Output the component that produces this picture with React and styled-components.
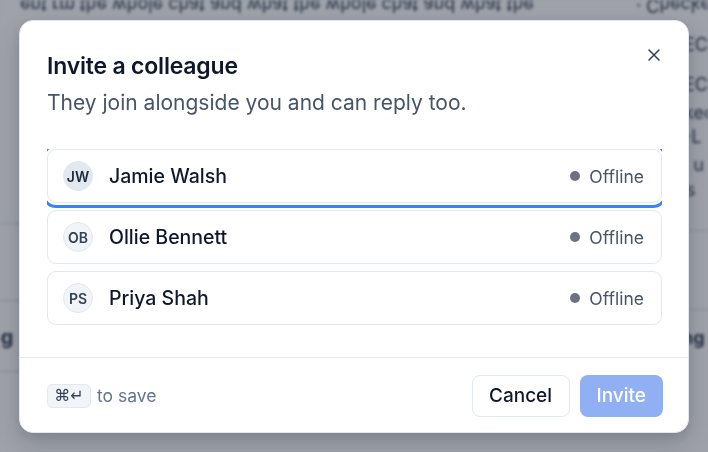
import React from "react";
import styled, { createGlobalStyle } from "styled-components";

const Global = createGlobalStyle`
  html, body { margin: 0; padding: 0; }
  body {
    font-family: Inter, "Noto Sans", "Liberation Sans", sans-serif;
    background: #f8fafc;
    width: 708px;
    height: 452px;
    overflow: hidden;
  }
  * { box-sizing: border-box; }
`;

const Page = styled.div`
  width: 708px;
  height: 452px;
  display: grid;
  grid-template-columns: 1fr 76px;
  background: #ffffff;
  color: #1e293b;
  filter: blur(1.4px);
`;

const Main = styled.div`
  display: flex;
  flex-direction: column;
  padding: 0 20px;
  overflow: hidden;
`;

const FlippedLine = styled.div`
  font-size: 18px;
  line-height: 20px;
  color: #334155;
  transform: scaleY(-1);
  margin-top: -5px;
  height: 20px;
  white-space: nowrap;
`;

const Rule = styled.div`
  height: 1px;
  background: #cbd5e1;
  margin-top: ${(p) => p.$mt}px;
  margin-left: -20px;
`;

const BoldFrag = styled.div`
  font-weight: 700;
  font-size: 20px;
  margin-top: ${(p) => p.$mt}px;
  margin-left: ${(p) => p.$ml || 0}px;
  color: #334155;
`;

const Side = styled.div`
  display: flex;
  flex-direction: column;
  font-size: 18px;
  color: #334155;
  white-space: nowrap;
  overflow: hidden;
`;

const SideItem = styled.div`
  line-height: 20px;
  height: 20px;
  margin-top: ${(p) => p.$mt || 0}px;
  padding-left: ${(p) => p.$indent || 0}px;
  font-weight: ${(p) => (p.$bold ? 700 : 400)};
  transform: ${(p) => (p.$flip ? "scaleY(-1)" : "none")};
`;

const SideRule = styled.div`
  height: 1px;
  background: #cbd5e1;
  margin-top: ${(p) => p.$mt}px;
`;

const Overlay = styled.div`
  position: fixed;
  inset: 0;
  background: rgba(15, 23, 42, 0.4);
  display: flex;
  align-items: center;
  justify-content: center;
`;

const Dialog = styled.div`
  position: relative;
  width: 670px;
  background: #ffffff;
  border-radius: 14px;
  border: 1px solid #e2e8f0;
  box-shadow: 0 10px 25px rgba(15, 23, 42, 0.18), 0 4px 8px rgba(15, 23, 42, 0.08);
  display: flex;
  flex-direction: column;
`;

const Header = styled.div`
  padding: 30px 26px 0 27px;
  display: flex;
  flex-direction: column;
  gap: 8px;
`;

const Title = styled.h2`
  margin: 0;
  font-size: 23px;
  line-height: 30px;
  font-weight: 600;
  color: #0f172a;
  letter-spacing: -0.2px;
`;

const Subtitle = styled.p`
  margin: 0;
  font-size: 21px;
  line-height: 28px;
  color: #475569;
`;

const CloseButton = styled.button`
  position: absolute;
  top: 21px;
  right: 21px;
  width: 26px;
  height: 26px;
  border: none;
  background: transparent;
  padding: 0;
  display: flex;
  align-items: center;
  justify-content: center;
  color: #334155;
  cursor: pointer;
`;

const ListWrap = styled.div`
  padding: 0 26px 0 27px;
  margin-top: 32px;
`;

const List = styled.div`
  display: flex;
  flex-direction: column;
  gap: 7px;
  overflow: hidden;
`;

const Row = styled.div`
  height: 54px;
  display: flex;
  align-items: center;
  gap: 16px;
  padding: 1px 17px 0 15px;
  border: 1px solid #e2e8f0;
  border-radius: 9px;
  background: #ffffff;
  outline: ${(p) => (p.$focused ? "3px solid #3b82f6" : "none")};
  outline-offset: 2px;
`;

const Avatar = styled.div`
  width: 30px;
  height: 30px;
  border-radius: 50%;
  flex: none;
  display: flex;
  align-items: center;
  justify-content: center;
  font-size: 14px;
  font-weight: 600;
  color: ${(p) => (p.$active ? "#1e293b" : "#334155")};
  background: ${(p) => (p.$active ? "#e2e8f0" : "#f1f5f9")};
  border: 1px solid #e2e8f0;
`;

const Name = styled.div`
  flex: 1;
  font-size: 19.5px;
  font-weight: 500;
  color: #0f172a;
`;

const Status = styled.div`
  display: flex;
  align-items: center;
  gap: 9px;
  font-size: 17.5px;
  color: #475569;
`;

const Dot = styled.span`
  width: 10px;
  height: 10px;
  border-radius: 50%;
  background: #6b7280;
`;

const Footer = styled.div`
  margin-top: 32px;
  border-top: 1px solid #e2e8f0;
  padding: 17px 25px 15px 27px;
  display: flex;
  align-items: center;
  gap: 10px;
`;

const Hint = styled.div`
  flex: 1;
  display: flex;
  align-items: center;
  gap: 6px;
  font-size: 17.5px;
  color: #64748b;
`;

const Kbd = styled.kbd`
  height: 24px;
  width: 44px;
  display: inline-flex;
  align-items: center;
  justify-content: center;
  gap: 2px;
  font-family: "DejaVu Sans", Inter, sans-serif;
  font-size: 16px;
  color: #334155;
  background: #f1f5f9;
  border: 1px solid #e2e8f0;
  border-radius: 6px;
`;

const Button = styled.button`
  height: 42px;
  padding: 0 16px;
  border-radius: 8px;
  font-family: inherit;
  font-size: 19px;
  font-weight: 500;
  cursor: pointer;
  border: 1px solid ${(p) => (p.$primary ? "transparent" : "#e2e8f0")};
  background: ${(p) => (p.$primary ? "#91b0f4" : "#ffffff")};
  color: ${(p) => (p.$primary ? "#ffffff" : "#0f172a")};
  min-width: ${(p) => (p.$primary ? 83 : 98)}px;
`;

const people = [
  { initials: "JW", name: "Jamie Walsh", focused: true },
  { initials: "OB", name: "Ollie Bennett" },
  { initials: "PS", name: "Priya Shah" },
];

export default function App() {
  return (
    <>
      <Global />
      <Page aria-hidden="true">
        <Main>
          <FlippedLine>ent rm the whole chat and what the whole chat and what the</FlippedLine>
          <Rule $mt={208} />
          <Rule $mt={76} />
          <BoldFrag $mt={24} $ml={-26}>.g</BoldFrag>
          <Rule $mt={22} />
        </Main>
        <Side>
          <SideItem $flip $mt={-5} $indent={4}>· Checke</SideItem>
          <SideItem $mt={20} $indent={52}>ECK</SideItem>
          <SideItem $mt={20} $indent={52}>ECK</SideItem>
          <SideItem $mt={8} $indent={52}>ked</SideItem>
          <SideItem $mt={4} $indent={51}>-L</SideItem>
          <SideItem $mt={8} $indent={51}>, u</SideItem>
          <SideItem $mt={5} $indent={54}>s</SideItem>
          <SideRule $mt={30} />
          <SideRule $mt={78} />
          <SideItem $bold $mt={18} $indent={50}>ng</SideItem>
        </Side>
      </Page>
      <Overlay>
        <Dialog role="dialog" aria-labelledby="invite-title">
          <CloseButton aria-label="Close">
            <svg width="14" height="14" viewBox="0 0 14 14" fill="none" stroke="currentColor" strokeWidth="1.5" strokeLinecap="round">
              <path d="M2 2L12 12M12 2L2 12" />
            </svg>
          </CloseButton>
          <Header>
            <Title id="invite-title">Invite a colleague</Title>
            <Subtitle>They join alongside you and can reply too.</Subtitle>
          </Header>
          <ListWrap>
            <List>
              {people.map((p) => (
                <Row key={p.initials} $focused={p.focused}>
                  <Avatar $active={p.focused}>{p.initials}</Avatar>
                  <Name>{p.name}</Name>
                  <Status>
                    <Dot />
                    Offline
                  </Status>
                </Row>
              ))}
            </List>
          </ListWrap>
          <Footer>
            <Hint>
              <Kbd>⌘↵</Kbd>
              to save
            </Hint>
            <Button>Cancel</Button>
            <Button $primary>Invite</Button>
          </Footer>
        </Dialog>
      </Overlay>
    </>
  );
}
